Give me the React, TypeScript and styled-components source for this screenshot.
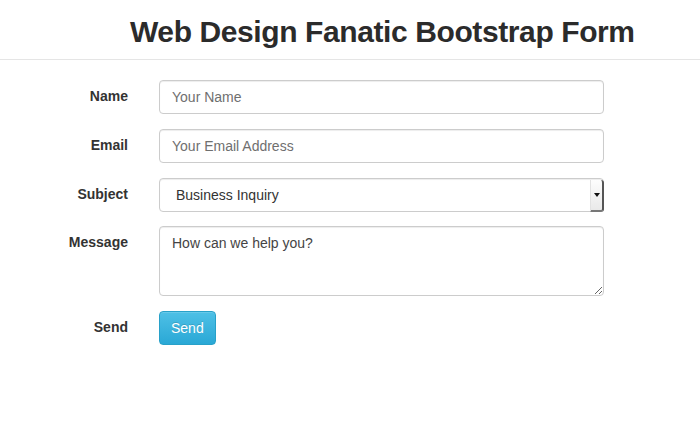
import { createGlobalStyle, styled } from "styled-components";

const GlobalStyle = createGlobalStyle`
    html, body {
        margin: 0;
        padding: 0;
        background: #fff;
        font-family: "Liberation Sans", Arial, sans-serif;
        color: #333;
    }
    * {
        box-sizing: border-box;
    }
`;

const Header = styled.header`
    height: 60px;
    border-bottom: 1px solid #e5e5e5;
    padding: 5px 0 0 130px;
    display: flex;
    align-items: center;
`;

const Title = styled.h1`
    margin: 0;
    font-size: 30px;
    font-weight: 700;
    color: #2b2b2b;
    letter-spacing: -0.4px;
`;

const Form = styled.form`
    display: grid;
    grid-template-columns: 128px 445px;
    column-gap: 31px;
    row-gap: 15px;
    padding-top: 20px;
`;

const Label = styled.label`
    text-align: right;
    font-size: 14px;
    font-weight: 700;
    color: #333;
    padding-top: 8px;
`;

const TextInput = styled.input`
    height: 34px;
    width: 100%;
    padding: 6px 12px;
    font-family: inherit;
    font-size: 14px;
    color: #555;
    border: 1px solid #ccc;
    border-radius: 4px;
    box-shadow: inset 0 1px 1px rgba(0, 0, 0, 0.075);
    outline: none;
    &::placeholder {
        color: #6f6f6f;
    }
`;

const SelectBox = styled.div`
    position: relative;
    height: 34px;
    margin-bottom: -1px;
`;

const Select = styled.select`
    appearance: none;
    height: 34px;
    width: 100%;
    padding: 6px 16px;
    font-family: inherit;
    font-size: 14px;
    color: #333;
    background: #fff;
    border: 1px solid #ccc;
    border-radius: 4px;
    box-shadow: inset 0 1px 1px rgba(0, 0, 0, 0.075);
    outline: none;
`;

const Stepper = styled.span`
    position: absolute;
    right: 0;
    top: 2px;
    bottom: 0;
    width: 14px;
    background: linear-gradient(#fdfdfd, #e9e9e9);
    border-left: 1px solid #e2e2e2;
    border-right: 2px solid #555;
    border-bottom: 2px solid #777;
    border-radius: 0 3px 3px 0;
    display: flex;
    align-items: center;
    justify-content: center;
    pointer-events: none;
`;

const TextArea = styled.textarea`
    height: 70px;
    width: 100%;
    padding: 6px 12px;
    font-family: inherit;
    font-size: 14px;
    line-height: 20px;
    color: #555;
    border: 1px solid #ccc;
    border-radius: 4px;
    box-shadow: inset 0 1px 1px rgba(0, 0, 0, 0.075);
    outline: none;
    resize: both;
    &::placeholder {
        color: #444;
    }
`;

const Button = styled.button`
    justify-self: start;
    height: 34px;
    padding: 0 11px;
    font-family: inherit;
    font-size: 14px;
    color: #fff;
    background: linear-gradient(#4ec0e6, #2aa8d6);
    border: 1px solid #28a1c9;
    border-radius: 4px;
    box-shadow: inset 0 1px 0 rgba(255, 255, 255, 0.15);
    text-shadow: 0 -1px 0 rgba(0, 0, 0, 0.15);
`;

function App() {
    return (
        <>
            <GlobalStyle />
            <Header>
                <Title>Web Design Fanatic Bootstrap Form</Title>
            </Header>
            <Form>
                <Label>Name</Label>
                <TextInput placeholder="Your Name" />
                <Label>Email</Label>
                <TextInput placeholder="Your Email Address" />
                <Label>Subject</Label>
                <SelectBox>
                    <Select defaultValue="business">
                        <option value="business">Business Inquiry</option>
                    </Select>
                    <Stepper>
                        <svg width="6" height="4" viewBox="0 0 6 4">
                            <path d="M0 0h6L3 4z" fill="#111" />
                        </svg>
                    </Stepper>
                </SelectBox>
                <Label>Message</Label>
                <TextArea placeholder="How can we help you?" />
                <Label>Send</Label>
                <Button type="button">Send</Button>
            </Form>
        </>
    );
}

export default App;
